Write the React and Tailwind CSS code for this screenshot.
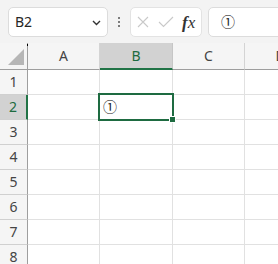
import React from 'react';

const font = { fontFamily: '"Noto Sans", "Noto Sans CJK JP", sans-serif' };

const cols = [
  { key: 'A', w: 'w-[72px]' },
  { key: 'B', w: 'w-[73px]' },
  { key: 'C', w: 'w-[72px]' },
  { key: 'D', w: 'w-[72px]' },
];
const rows = [1, 2, 3, 4, 5, 6, 7, 8];

function TopBar() {
  return (
    <div className="h-[43px] bg-[#f3f3f3] flex items-start pt-[7px] pl-[8px] gap-0 overflow-hidden">
      {/* name box */}
      <div className="w-[100px] h-[30px] shrink-0 bg-white border border-[#dcdcdc] rounded-[5px] flex items-center justify-between pl-[6px] pr-[6px]">
        <span className="text-[14px] text-[#262626] leading-none">B2</span>
        <svg width="9" height="6" viewBox="0 0 9 6" className="mt-[1px]">
          <path d="M1 1 L4.5 4.5 L8 1" fill="none" stroke="#333" strokeWidth="1.4" />
        </svg>
      </div>
      <div className="w-[22px] h-[30px] shrink-0 flex flex-col items-center justify-center gap-[2px]">
        <span className="w-[2px] h-[2px] bg-[#555] rounded-full" />
        <span className="w-[2px] h-[2px] bg-[#555] rounded-full" />
        <span className="w-[2px] h-[2px] bg-[#555] rounded-full" />
      </div>
      {/* cancel / enter / fx */}
      <div className="w-[72px] h-[30px] shrink-0 bg-white border border-[#e3e3e3] rounded-[5px] flex items-center pl-[5px]">
        <svg width="12" height="12" viewBox="0 0 12 12" className="ml-[1px]">
          <path d="M1 1 L11 11 M11 1 L1 11" stroke="#c9c9c9" strokeWidth="1.1" />
        </svg>
        <svg width="16" height="12" viewBox="0 0 16 12" className="ml-[9px]">
          <path d="M1 6 L5.5 10.5 L15 1" fill="none" stroke="#c9c9c9" strokeWidth="1.1" />
        </svg>
        <span className="ml-[8px] text-[17px] italic text-[#333] leading-none" style={{ fontFamily: '"Liberation Serif", serif' }}>
          <span className="font-bold">f</span>x
        </span>
      </div>
      {/* formula input */}
      <div className="ml-[6px] w-[90px] h-[30px] shrink-0 bg-white border border-[#dcdcdc] rounded-[5px] flex items-center pl-[12px]">
        <span className="text-[14px] text-[#222] leading-none">①</span>
      </div>
    </div>
  );
}

function Grid() {
  return (
    <div className="flex flex-col">
      {/* header row */}
      <div className="flex h-[27px] bg-[#f5f5f5]">
        <div className="relative w-[28px] shrink-0 border-r border-b border-[#9e9e9e] bg-[#f5f5f5]">
          <svg width="16" height="16" viewBox="0 0 16 16" className="absolute left-[8px] top-[6px]">
            <path d="M16 0 L16 16 L0 16 Z" fill="#b6b6b6" />
          </svg>
          <span className="absolute right-[-1px] top-[1px] w-[1px] h-[2px] bg-black" />
        </div>
        {cols.map((c) => (
          <div
            key={c.key}
            className={`${c.w} shrink-0 flex items-center justify-center text-[14px] leading-none ${
              c.key === 'B'
                ? 'bg-[#d2d2d2] text-[#1d6b40] border-b-2 border-[#217346] border-r border-r-[#c6c6c6]'
                : 'text-[#444] border-b border-[#9e9e9e] border-r border-r-[#d4d4d4]'
            }`}
          >
            {c.key}
          </div>
        ))}
      </div>
      {rows.map((r) => (
        <div key={r} className="flex h-[25px]">
          <div
            className={`w-[28px] shrink-0 flex items-center justify-center text-[14px] leading-none border-b border-[#d0d0d0] ${
              r === 2
                ? 'bg-[#d2d2d2] text-[#1d6b40] border-r-2 border-r-[#217346]'
                : 'bg-[#f5f5f5] text-[#444] border-r border-r-[#9e9e9e]'
            }`}
          >
            {r}
          </div>
          {cols.map((c) => (
            <div key={c.key} className={`${c.w} shrink-0 relative bg-white border-b border-r border-[#e1e1e1]`}>
              {r === 2 && c.key === 'B' && (
                <>
                  <span className="absolute left-[3px] top-[2px] text-[14px] leading-[20px] text-[#222]">①</span>
                  <div className="absolute z-10 left-[-2px] top-[-2px] right-[-2px] bottom-[-2px] border-2 border-[#1e6b41]" />
                  <div className="absolute z-20 right-[-4px] bottom-[-4px] w-[7px] h-[7px] bg-[#1e6b41] border border-white" />
                </>
              )}
            </div>
          ))}
        </div>
      ))}
    </div>
  );
}

export default function App() {
  return (
    <div className="w-[278px] h-[264px] overflow-hidden bg-white" style={font}>
      <TopBar />
      <Grid />
    </div>
  );
}
